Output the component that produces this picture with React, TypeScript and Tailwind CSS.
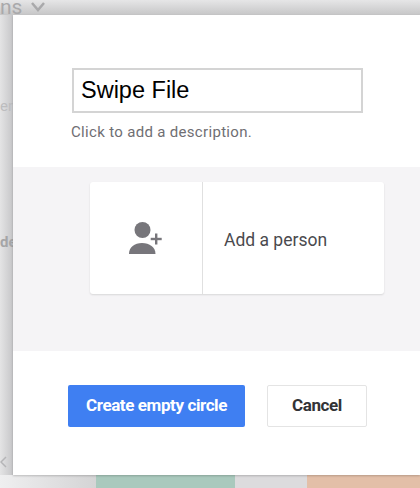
import React from "react";

function PersonAdd() {
  return (
    <svg width="36" height="32" viewBox="0 0 36 32" fill="#77767b">
      <circle cx="14.5" cy="8" r="8" />
      <path d="M1 32 C1 25 6.5 21 14 21 C21.5 21 27.5 25 27.5 32 Z" />
      <rect x="27" y="11.5" width="2.4" height="11" />
      <rect x="22.7" y="15.8" width="11" height="2.4" />
    </svg>
  );
}

export default function App() {
  return (
    <div className="relative w-[420px] h-[488px] overflow-hidden bg-[#dcdcdd] font-['Roboto',sans-serif]">
      <div className="h-[15px] bg-gradient-to-b from-[#e6e6e7] to-[#c6c6c7] text-[#a9a9ab] text-[21px] leading-[14px] flex items-start">
        <span className="ml-0">ns</span>
      </div>
      <div className="absolute left-0 top-[15px] w-[13px] h-[460px] bg-gradient-to-r from-[#e4e4e5] to-[#c6c6c8]" />
      <span className="absolute left-0 top-[95px] text-[15px] text-[#bdbdbf]">ers</span>
      <span className="absolute left-0 top-[231px] text-[15px] font-bold text-[#a5a5a7]">de</span>
      <svg className="absolute left-[30px] top-[1px]" width="16" height="12" viewBox="0 0 16 12" fill="none" stroke="#a9a9ab" strokeWidth="2.5">
        <path d="M2 2 L8 9 L14 2" />
      </svg>
      <svg className="absolute left-0 top-[456px]" width="7" height="12" viewBox="0 0 7 12" fill="none" stroke="#b5b5b7" strokeWidth="1.5">
        <path d="M6 1 L1 6 L6 11" />
      </svg>
      <div className="absolute left-0 right-0 bottom-0 h-[13px] flex">
        <div className="w-[96px] bg-gradient-to-r from-[#efeff0] to-[#d4d4d5]" />
        <div className="w-[139px] bg-[#a9c9bd]" />
        <div className="w-[72px] bg-[#dcdbdd]" />
        <div className="flex-1 bg-[#e3bfa8]" />
      </div>
      <div className="absolute left-[13px] top-[15px] w-[407px] h-[460px] bg-white flex flex-col shadow-[0_1px_2px_rgba(0,0,0,0.2)]">
        <div className="h-[152px] pl-[59px] pt-[53px] flex flex-col">
          <div className="w-[291px] h-[45px] border-2 border-[#d4d4d4] px-[7px] flex items-center text-[23.5px] text-black font-['Liberation_Sans',sans-serif]">
            Swipe File
          </div>
          <p className="mt-[10px] -ml-[1px] text-[15px] leading-[18px] tracking-[0.32px] text-[#6f6e73]">Click to add a description.</p>
        </div>
        <div className="h-[184px] bg-[#f5f4f6] pl-[77px] pt-[15px]">
          <div className="w-[294px] h-[112px] bg-white rounded-[3px] flex shadow-[0_1px_2px_rgba(0,0,0,0.12)]">
            <div className="w-[113px] border-r border-[#e0e0e0] flex items-center justify-center">
              <PersonAdd />
            </div>
            <div className="flex-1 flex items-center pl-[21px] pt-[5px] text-[17.5px] text-[#4a4a4e]">Add a person</div>
          </div>
        </div>
        <div className="flex-1 pl-[55px] pt-[34px] flex items-start gap-[22px]">
          <button className="w-[177px] h-[42px] rounded-[2px] bg-[#3f7ff2] text-white text-[17px] font-bold tracking-[-0.4px]">Create empty circle</button>
          <button className="w-[100px] h-[42px] rounded-[2px] border border-[#e4e4e4] bg-white text-[#333336] text-[17px] font-bold tracking-[-0.4px]">Cancel</button>
        </div>
      </div>
    </div>
  );
}
